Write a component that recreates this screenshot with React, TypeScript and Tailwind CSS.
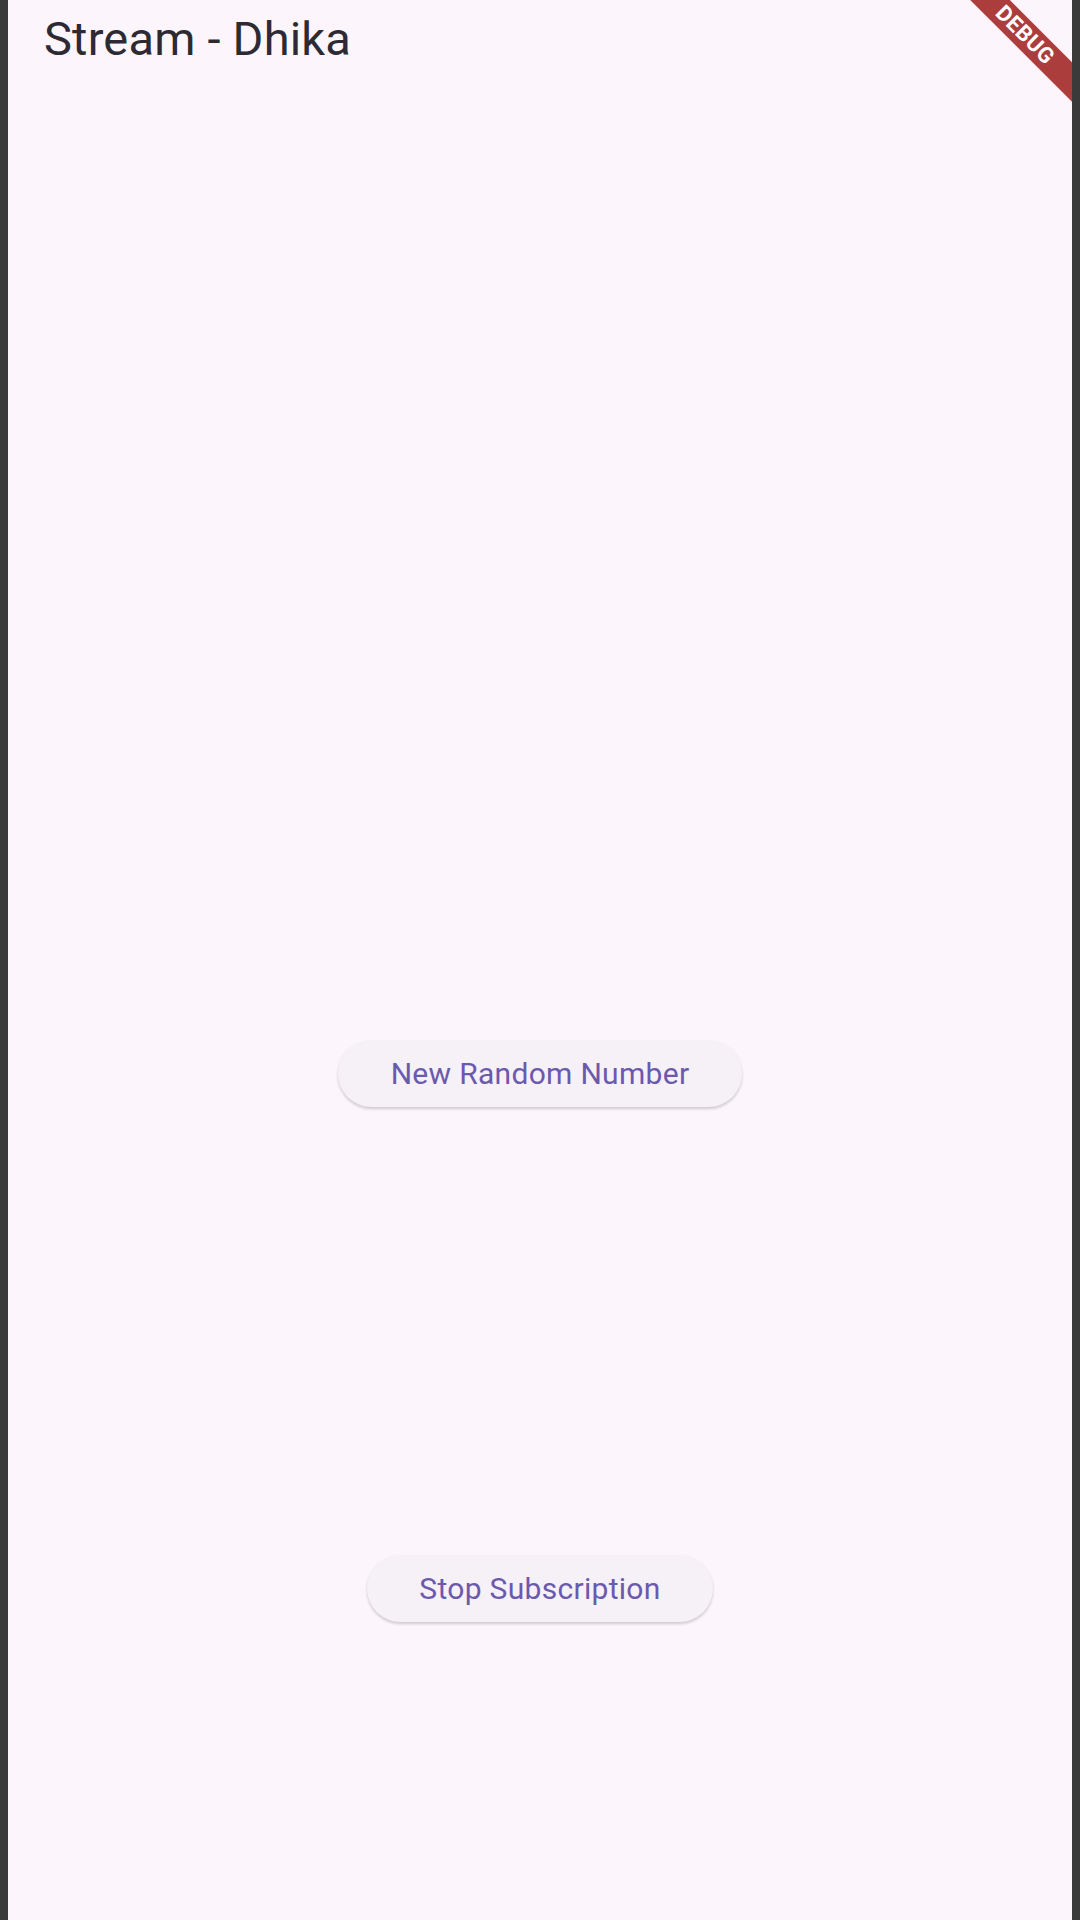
import React from "react";

export default function App() {
  return (
    <div className="w-[1080px] h-[1920px] bg-[#3a3a3a] px-[8px] overflow-hidden" style={{ fontFamily: "Roboto, 'Noto Sans', sans-serif" }}>
      <div className="relative w-full h-full bg-[#fcf6fc] flex flex-col">
        <div className="h-[100px] pl-[36px] pt-[7px]">
          <h1 className="text-[47px] leading-[64px] text-[#2e2a33] font-normal tracking-[0.2px]">Stream - Dhika</h1>
        </div>
        <div className="flex flex-col items-center">
          <button className="mt-[940px] w-[404px] h-[67px] rounded-full bg-[#f6f0f7] text-[#6a5aad] text-[30px] tracking-[0.3px] shadow-[0_2px_3px_rgba(0,0,0,0.18)] flex items-center justify-center">
            New Random Number
          </button>
          <button className="mt-[448px] w-[346px] h-[67px] rounded-full bg-[#f6f0f7] text-[#6a5aad] text-[30px] tracking-[0.3px] shadow-[0_2px_3px_rgba(0,0,0,0.18)] flex items-center justify-center">
            Stop Subscription
          </button>
        </div>
        <div className="absolute top-0 right-0 w-[120px] h-[120px] overflow-hidden pointer-events-none">
          <div className="absolute left-[-47px] top-[21px] w-[240px] h-[28px] bg-[#ab3d3d] rotate-45 flex items-center justify-center text-white font-bold text-[22px] leading-none tracking-[0.5px]">
            DEBUG
          </div>
        </div>
      </div>
    </div>
  );
}
